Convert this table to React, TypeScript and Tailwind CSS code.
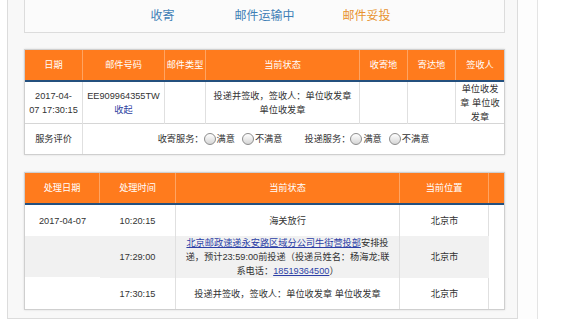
import React from 'react';

// 상단 진행 상태
const steps = [
    { label: '收寄', color: 'text-[#3f7fb6]' },
    { label: '邮件运输中', color: 'text-[#3f7fb6]' },
    { label: '邮件妥投', color: 'text-[#e8922f]' },
];

const headCell = 'flex items-center justify-center border-r border-[#ffa462] text-white';
const bodyCell = 'flex items-center justify-center text-center border-r border-[#e0e0e0]';

const Radio: React.FC<{ label: string }> = ({ label }) => (
    <span className="inline-flex items-center">
        <span className="inline-block w-[12px] h-[12px] rounded-full border border-[#8d8d8d] bg-linear-to-b from-white to-[#d6d6d6] mr-[1px]" />
        <span>{label}</span>
    </span>
);

const MailTable: React.FC = () => (
    <div className="mt-[16px] bg-white border border-[#cfcfcf] shadow-[0_0_2px_rgba(0,0,0,0.12)]">
        <div className="grid grid-cols-[58px_82px_41px_154px_48px_48px_48px] h-[32px] bg-[#ff7b1d] border-b-2 border-[#24507e]">
            <div className={headCell}>日期</div>
            <div className={headCell}>邮件号码</div>
            <div className={`${headCell} whitespace-nowrap`}>邮件类型</div>
            <div className={headCell}>当前状态</div>
            <div className={headCell}>收寄地</div>
            <div className={headCell}>寄达地</div>
            <div className="flex items-center justify-center text-white">签收人</div>
        </div>
        <div className="grid grid-cols-[58px_82px_41px_154px_48px_48px_48px] h-[42px] border-b border-[#d6d6d6]">
            <div className={bodyCell}>
                2017-04-
                <br />
                07 17:30:15
            </div>
            <div className={`${bodyCell} flex-col`}>
                <span>EE909964355TW</span>
                <span className="text-[#2c3f9f]">收起</span>
            </div>
            <div className={bodyCell} />
            <div className={`${bodyCell} flex-col`}>
                <span>投递并签收，签收人：单位收发章</span>
                <span>单位收发章</span>
            </div>
            <div className={bodyCell} />
            <div className={bodyCell} />
            <div className="flex items-center justify-center text-center">
                单位收发
                <br />
                章 单位收
                <br />
                发章
            </div>
        </div>
        <div className="grid grid-cols-[58px_1fr] h-[30px]">
            <div className={bodyCell}>服务评价</div>
            <div className="flex items-center justify-center">
                <span>收寄服务：</span>
                <Radio label="满意" />
                <span className="w-[7px]" />
                <Radio label="不满意" />
                <span className="w-[22px]" />
                <span>投递服务：</span>
                <Radio label="满意" />
                <span className="w-[7px]" />
                <Radio label="不满意" />
            </div>
        </div>
    </div>
);

// 처리 내역
const TraceTable: React.FC = () => (
    <div className="mt-[17px] bg-white border border-[#cfcfcf] shadow-[0_0_2px_rgba(0,0,0,0.12)]">
        <div className="grid grid-cols-[75px_76px_224px_89px_15px] h-[32px] bg-[#ff7b1d] border-b-2 border-[#24507e]">
            <div className={headCell}>处理日期</div>
            <div className={headCell}>处理时间</div>
            <div className={headCell}>当前状态</div>
            <div className={headCell}>当前位置</div>
            <div />
        </div>
        <div className="grid grid-cols-[75px_76px_224px_89px_15px]">
            <div className="col-span-4 grid grid-cols-[75px_76px_224px_89px] border-r border-[#e0e0e0]">
                <div className="h-[31px] flex items-center justify-center">2017-04-07</div>
                <div className="flex items-center justify-center border-r border-[#e0e0e0]">10:20:15</div>
                <div className="flex items-center justify-center border-r border-[#e0e0e0]">海关放行</div>
                <div className="flex items-center justify-center">北京市</div>

                <div className="h-[41px] bg-[#f1f1f1]" />
                <div className="flex items-center justify-center bg-[#f1f1f1] border-r border-[#e0e0e0]">17:29:00</div>
                <div className="flex items-center justify-center text-center bg-[#f1f1f1] border-r border-[#e0e0e0]">
                    <span>
                        <span className="text-[#2c3fa6] underline">北京邮政速递永安路区域分公司牛街营投部</span>安排投
                        <br />
                        递，预计23:59:00前投递（投递员姓名：杨海龙;联
                        <br />
                        系电话：<span className="text-[#2c3fa6] underline">18519364500</span>）
                    </span>
                </div>
                <div className="flex items-center justify-center bg-[#f1f1f1]">北京市</div>

                <div className="h-[31px]" />
                <div className="flex items-center justify-center border-r border-[#e0e0e0]">17:30:15</div>
                <div className="flex items-center justify-center border-r border-[#e0e0e0]">投递并签收，签收人：单位收发章 单位收发章</div>
                <div className="flex items-center justify-center">北京市</div>
            </div>
            <div />
        </div>
    </div>
);

export default function App() {
    return (
        <div
            className="w-[569px] h-[320px] bg-white overflow-hidden flex text-[9.2px] leading-[14px] text-[#333]"
            style={{ fontFamily: '"Liberation Sans", "Noto Sans CJK SC", sans-serif' }}
        >
            <div className="ml-[7px] w-[511px] h-[319px] border-l border-r border-b border-[#dcdcdc] bg-[#f8f8f8] pl-[16px] pr-[12px]">
                <div className="h-[33px] flex items-center justify-center border-l border-r border-b border-[#dcdcdc] bg-[#fbfbfb] text-[12px]">
                    {steps.map((s) => (
                        <span key={s.label} className={`w-[102px] text-center ${s.color}`}>
                            {s.label}
                        </span>
                    ))}
                </div>
                <MailTable />
                <TraceTable />
            </div>
            <div className="w-[20px] h-[319px] border-r border-[#e4e4e4] bg-[#fdfdfd]" />
        </div>
    );
}
